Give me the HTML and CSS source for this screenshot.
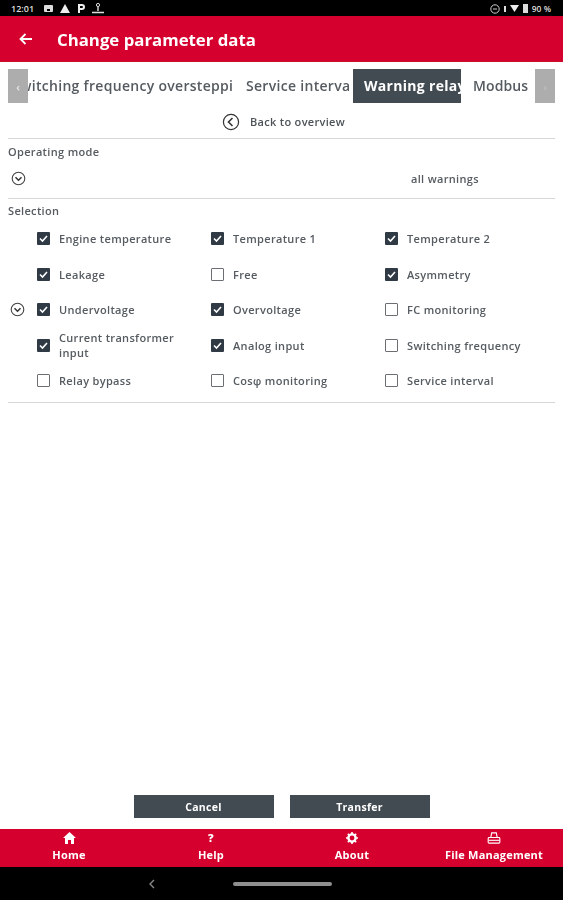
FILE: index.html
```html
<!DOCTYPE html>
<html lang="en">
<head>
  <meta charset="UTF-8">
  <meta name="viewport" content="width=device-width, initial-scale=1">
  <title>Change parameter data</title>
  <link rel="stylesheet" href="styles.css">
</head>
<body>
  <div class="statusbar">
    <div class="status-left">
      <span class="clock">12:01</span>
      <svg width="9" height="9" viewBox="0 0 9 9"><rect x="0" y="1" width="9" height="7" rx="1" fill="#ddd"/><rect x="3" y="5" width="3" height="2" fill="#000"/></svg>
      <svg width="10" height="9" viewBox="0 0 10 9"><path d="M5 0 L10 9 H0 Z" fill="#eee"/></svg>
      <svg width="8" height="9" viewBox="0 0 8 9"><path d="M1 0 H5 A3 3 0 0 1 5 6 H3 V9 H1 Z M3 2 V4 H5 A1 1 0 0 0 5 2 Z" fill="#eee" fill-rule="evenodd"/></svg>
      <svg width="12" height="11" viewBox="0 0 12 11"><circle cx="6" cy="2" r="1.6" fill="none" stroke="#ddd"/><path d="M6 4 V8 M0 9.5 H12" stroke="#ddd" stroke-width="1.4"/></svg>
    </div>
    <div class="status-right">
      <svg width="10" height="10" viewBox="0 0 10 10"><circle cx="5" cy="5" r="4.2" fill="none" stroke="#ccc"/><path d="M3 5 H7" stroke="#ccc"/></svg>
      <svg width="2" height="6" viewBox="0 0 2 6"><rect width="2" height="6" fill="#ddd"/></svg>
      <svg width="9" height="7" viewBox="0 0 9 7"><path d="M0 0 H9 L4.5 7 Z" fill="#eee"/></svg>
      <svg width="5" height="9" viewBox="0 0 5 9"><rect width="5" height="9" fill="#ddd"/></svg>
      <span class="battery">90 %</span>
    </div>
  </div>

  <header class="appbar">
    <svg class="back-arrow" width="14" height="12" viewBox="0 0 14 12"><path d="M13 6 H2 M6.5 1 L1.5 6 L6.5 11" fill="none" stroke="#fff" stroke-width="1.8"/></svg>
    <h1>Change parameter data</h1>
  </header>

  <div class="tabs">
    <div class="tab-scroll"><span>‹</span></div>
    <div class="tab-window">
      <div class="tab-strip">
        <div class="tab tab-long">Switching frequency oversteppi</div>
        <div class="tab tab-service">Service interva</div>
        <div class="tab tab-active"><span>Warning relay</span></div>
        <div class="tab tab-modbus">Modbus</div>
      </div>
    </div>
    <div class="tab-scroll tab-scroll-end"><span>›</span></div>
  </div>

  <div class="back-link">
    <svg width="18" height="18" viewBox="0 0 18 18"><circle cx="9" cy="9" r="7.6" fill="none" stroke="#333" stroke-width="1.2"/><path d="M10.5 5 L6.5 9 L10.5 13" fill="none" stroke="#333" stroke-width="1.6"/></svg>
    <span class="back-text">Back to overview</span>
  </div>
  <hr class="line line-first">

  <div class="field-label label-mode">Operating mode</div>
  <div class="mode-row">
    <svg class="chevron" width="15" height="15" viewBox="0 0 15 15"><circle cx="7.5" cy="7.5" r="6.3" fill="none" stroke="#444" stroke-width="1.1"/><path d="M4.5 6.2 L7.5 9.2 L10.5 6.2" fill="none" stroke="#333" stroke-width="1.5"/></svg>
    <span class="mode-value">all warnings</span>
  </div>
  <hr class="line">

  <div class="field-label label-selection">Selection</div>
  <div class="options">
    <div class="option-row">
      <div class="gutter"></div>
      <label class="option"><span class="box on"><svg width="13" height="13" viewBox="0 0 13 13"><path d="M3 6.5 L5.5 9 L10 4" fill="none" stroke="#fff" stroke-width="1.6"/></svg></span>Engine temperature</label>
      <label class="option"><span class="box on"><svg width="13" height="13" viewBox="0 0 13 13"><path d="M3 6.5 L5.5 9 L10 4" fill="none" stroke="#fff" stroke-width="1.6"/></svg></span>Temperature 1</label>
      <label class="option"><span class="box on"><svg width="13" height="13" viewBox="0 0 13 13"><path d="M3 6.5 L5.5 9 L10 4" fill="none" stroke="#fff" stroke-width="1.6"/></svg></span>Temperature 2</label>
    </div>
    <div class="option-row">
      <div class="gutter"></div>
      <label class="option"><span class="box on"><svg width="13" height="13" viewBox="0 0 13 13"><path d="M3 6.5 L5.5 9 L10 4" fill="none" stroke="#fff" stroke-width="1.6"/></svg></span>Leakage</label>
      <label class="option"><span class="box"></span>Free</label>
      <label class="option"><span class="box on"><svg width="13" height="13" viewBox="0 0 13 13"><path d="M3 6.5 L5.5 9 L10 4" fill="none" stroke="#fff" stroke-width="1.6"/></svg></span>Asymmetry</label>
    </div>
    <div class="option-row">
      <div class="gutter"><svg class="chevron" width="15" height="15" viewBox="0 0 15 15"><circle cx="7.5" cy="7.5" r="6.3" fill="none" stroke="#444" stroke-width="1.1"/><path d="M4.5 6.2 L7.5 9.2 L10.5 6.2" fill="none" stroke="#333" stroke-width="1.5"/></svg></div>
      <label class="option"><span class="box on"><svg width="13" height="13" viewBox="0 0 13 13"><path d="M3 6.5 L5.5 9 L10 4" fill="none" stroke="#fff" stroke-width="1.6"/></svg></span>Undervoltage</label>
      <label class="option"><span class="box on"><svg width="13" height="13" viewBox="0 0 13 13"><path d="M3 6.5 L5.5 9 L10 4" fill="none" stroke="#fff" stroke-width="1.6"/></svg></span>Overvoltage</label>
      <label class="option"><span class="box"></span>FC monitoring</label>
    </div>
    <div class="option-row">
      <div class="gutter"></div>
      <label class="option"><span class="box on"><svg width="13" height="13" viewBox="0 0 13 13"><path d="M3 6.5 L5.5 9 L10 4" fill="none" stroke="#fff" stroke-width="1.6"/></svg></span>Current transformer input</label>
      <label class="option"><span class="box on"><svg width="13" height="13" viewBox="0 0 13 13"><path d="M3 6.5 L5.5 9 L10 4" fill="none" stroke="#fff" stroke-width="1.6"/></svg></span>Analog input</label>
      <label class="option"><span class="box"></span>Switching frequency</label>
    </div>
    <div class="option-row">
      <div class="gutter"></div>
      <label class="option"><span class="box"></span>Relay bypass</label>
      <label class="option"><span class="box"></span>Cosφ monitoring</label>
      <label class="option"><span class="box"></span>Service interval</label>
    </div>
  </div>
  <hr class="line">

  <div class="spacer"></div>

  <div class="actions">
    <button class="btn">Cancel</button>
    <button class="btn">Transfer</button>
  </div>

  <nav class="bottom-nav">
    <div class="nav-item">
      <svg width="13" height="12" viewBox="0 0 13 12"><path d="M6.5 0 L13 6 H11 V12 H8 V8 H5 V12 H2 V6 H0 Z" fill="#fff"/></svg>
      <span>Home</span>
    </div>
    <div class="nav-item">
      <b class="help-mark">?</b>
      <span>Help</span>
    </div>
    <div class="nav-item">
      <svg width="12" height="12" viewBox="0 0 12 12"><circle cx="6" cy="6" r="3.6" fill="none" stroke="#fff" stroke-width="2.4"/><path d="M6 0 V2 M6 10 V12 M0 6 H2 M10 6 H12 M1.8 1.8 L3 3 M9 9 L10.2 10.2 M1.8 10.2 L3 9 M9 3 L10.2 1.8" stroke="#fff" stroke-width="1.6"/></svg>
      <span>About</span>
    </div>
    <div class="nav-item">
      <svg width="14" height="13" viewBox="0 0 14 13"><path d="M3.5 6 L4.5 1 H9.5 L10.5 6" fill="none" stroke="#fff" stroke-width="1.2"/><rect x="0.7" y="6" width="12.6" height="6" rx="1" fill="none" stroke="#fff" stroke-width="1.2"/><path d="M1 9 H13" stroke="#fff" stroke-width="1.2"/></svg>
      <span>File Management</span>
    </div>
  </nav>

  <div class="sysnav">
    <svg class="sys-back" width="6" height="10" viewBox="0 0 6 10"><path d="M5 1 L1 5 L5 9" fill="none" stroke="#888" stroke-width="1.4"/></svg>
    <div class="sys-pill"></div>
  </div>
</body>
</html>
```

FILE: styles.css
```css
* {
  box-sizing: border-box;
}
html, body {
  height: 100%;
}
body {
  margin: 0;
  background: #fff;
  color: #555b60;
  font-family: "Open Sans", sans-serif;
  font-weight: 600;
  display: flex;
  flex-direction: column;
  height: 900px;
  overflow: hidden;
  /* the reference is a soft, upscaled capture */
  filter: blur(0.45px);
}

/* status bar */
.statusbar {
  height: 16px;
  background: #000;
  color: #ddd;
  display: flex;
  justify-content: space-between;
  align-items: center;
  padding: 1px 12px 0 11px;
  font-size: 8.5px;
}
.status-left, .status-right {
  display: flex;
  align-items: center;
  gap: 5px;
}
.status-left {
  gap: 7px;
}
.status-right {
  gap: 4px;
}
.clock {
  font-size: 9px;
  margin-right: 3px;
}

/* app bar */
.appbar {
  height: 46px;
  background: #d5002e;
  border-bottom: 1px solid #c9102a;
  display: flex;
  align-items: center;
  padding-left: 19px;
}
.appbar h1 {
  margin: 1px 0 0 24px;
  font-size: 16.8px;
  font-weight: 700;
  color: #fff;
}

/* tabs */
.tabs {
  display: flex;
  height: 34px;
  margin: 7px 8px 0;
}
.tab-scroll {
  flex: 0 0 20px;
  background: #adadad;
  color: #e8e8e8;
  display: flex;
  align-items: center;
  justify-content: center;
  font-size: 11px;
}
.tab-scroll-end {
  color: #bdbdbd;
}
.tab-window {
  flex: 1;
  overflow: hidden;
}
.tab-strip {
  display: flex;
  height: 100%;
  margin-left: -26px;
  width: 640px;
}
.tab {
  display: flex;
  align-items: center;
  padding-bottom: 2px;
  font-size: 14px;
  letter-spacing: 0.3px;
  white-space: nowrap;
  overflow: hidden;
}
.tab-long {
  width: 236px;
  padding-left: 10px;
}
.tab-service {
  width: 115px;
  padding-left: 8px;
}
.tab-active {
  width: 108px;
  background: #434b52;
  color: #fff;
  font-weight: 700;
  padding-left: 11px;
}
.tab-modbus {
  padding-left: 12px;
  letter-spacing: 0.1px;
}

/* back link */
.back-link {
  display: flex;
  align-items: center;
  justify-content: center;
  gap: 10px;
  height: 18px;
  margin-top: 10px;
  padding-left: 4px;
  font-size: 11px;
  letter-spacing: 0.3px;
  color: #4d5358;
}
.back-text {
  margin-bottom: 1px;
}
.line {
  margin: 0 8px;
  border: 0;
  border-top: 1px solid #d6d6d6;
}
.line-first {
  margin-top: 7px;
}
.field-label {
  padding-left: 8px;
  font-size: 11px;
  letter-spacing: 0.33px;
}
.label-mode {
  margin-top: 5px;
  line-height: 16px;
}
.mode-row {
  height: 37px;
  margin-top: 1px;
  padding: 0 0 2px 11px;
  display: flex;
  align-items: center;
  font-size: 11px;
  letter-spacing: 0.33px;
}
.mode-value {
  margin-left: 385px;
}
.label-selection {
  margin-top: 4px;
  line-height: 16px;
}

/* selection grid */
.options {
  margin-top: 2px;
  margin-bottom: 3px;
}
.option-row {
  display: grid;
  grid-template-columns: 37px repeat(3, 174px);
  height: 35.5px;
  align-items: center;
}
.gutter {
  padding-left: 10px;
  display: flex;
}
.option {
  display: flex;
  align-items: center;
  gap: 9px;
  font-size: 11px;
  letter-spacing: 0.33px;
  line-height: 15px;
  padding-right: 30px;
}
.box {
  flex: 0 0 13px;
  width: 13px;
  height: 13px;
  border: 1px solid #6b6f73;
  border-radius: 1px;
  background: #fff;
}
.box.on {
  background: #2f3a44;
  border: 0;
}
.box svg {
  display: block;
}

.spacer {
  flex: 1;
}

/* buttons */
.actions {
  display: flex;
  justify-content: center;
  gap: 16px;
  margin-bottom: 11px;
}
.btn {
  width: 140px;
  height: 23px;
  border: 0;
  padding: 0;
  background: #434b52;
  color: #fff;
  font-family: "Open Sans", sans-serif;
  font-size: 10.5px;
  letter-spacing: 0.3px;
  font-weight: 700;
}

/* bottom nav */
.bottom-nav {
  height: 38px;
  background: #d5002e;
  color: #fff;
  display: grid;
  grid-template-columns: 138px 146px 136px 143px;
}
.nav-item {
  display: flex;
  flex-direction: column;
  align-items: center;
  padding-top: 3px;
  font-size: 11px;
  letter-spacing: 0.2px;
  font-weight: 700;
  line-height: 15px;
}
.nav-item svg {
  display: block;
  height: 12px;
  margin-bottom: 3px;
}
.nav-item:last-child {
  padding-left: 5px;
}
.help-mark {
  height: 15px;
  line-height: 12px;
  font-size: 11px;
}

/* system nav */
.sysnav {
  height: 33px;
  background: #000;
  display: flex;
  align-items: center;
  padding-left: 149px;
}
.sys-pill {
  width: 99px;
  height: 4px;
  border-radius: 2px;
  background: #8f8f8f;
  margin-left: 78px;
}
```
